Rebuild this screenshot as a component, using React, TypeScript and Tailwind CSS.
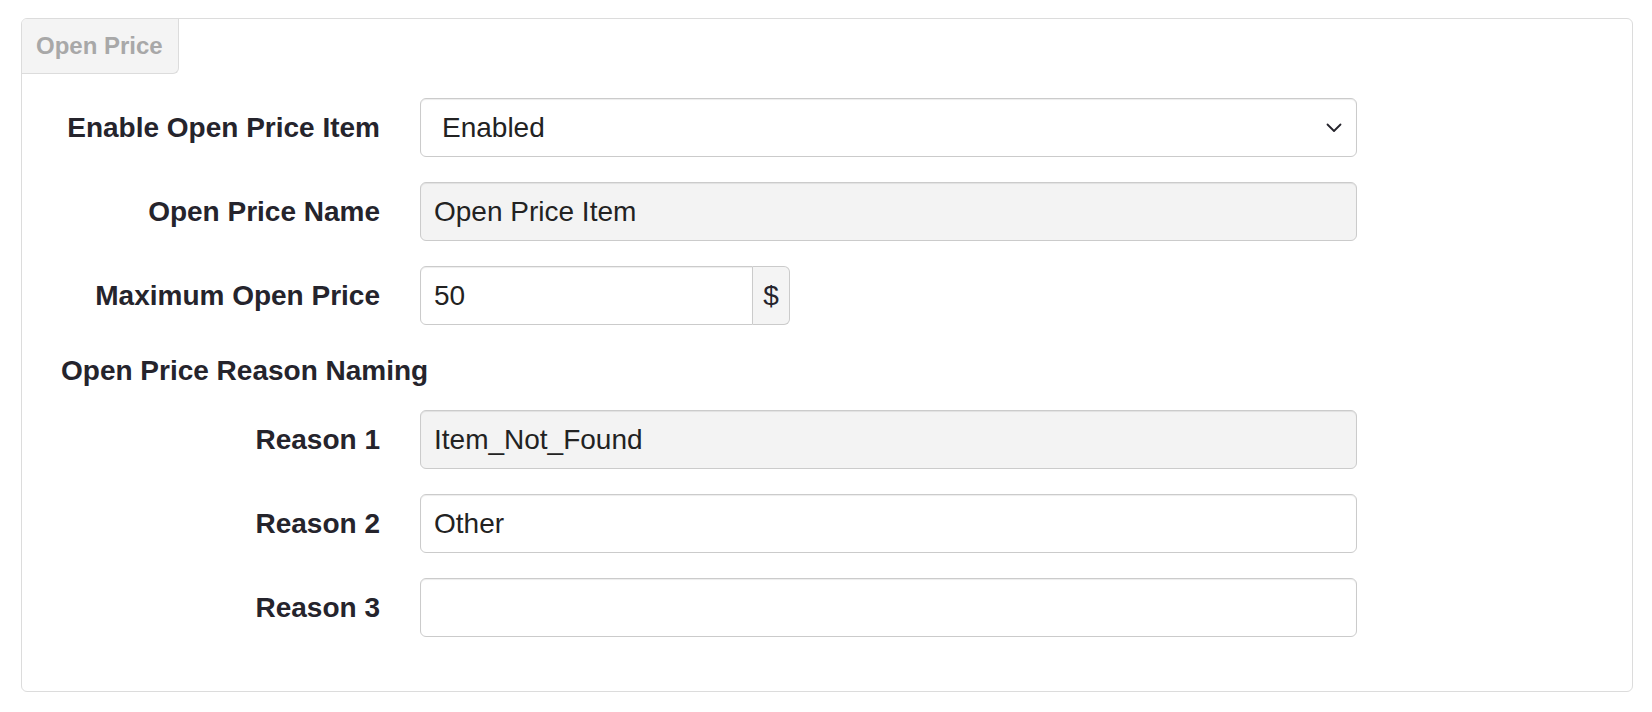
import { useState } from 'react';

const labelCls =
  'w-[358px] shrink-0 text-right text-[28px] font-bold leading-[59px] text-[#25242c]';
const inputCls =
  'h-[59px] w-[937px] rounded-[6px] border border-[#cbcbcb] px-[13px] text-[28px] text-[#222] outline-none shadow-[inset_0_1px_1px_rgba(0,0,0,0.075)]';

function Row({ label, children, className = '' }: { label: string; children: React.ReactNode; className?: string }) {
  return (
    <div className={`flex items-center ${className}`}>
      <label className={labelCls}>{label}</label>
      <div className="ml-[40px]">{children}</div>
    </div>
  );
}

export default function App() {
  const [enabled, setEnabled] = useState('Enabled');
  const [maxPrice, setMaxPrice] = useState('50');
  const [reason2, setReason2] = useState('Other');
  const [reason3, setReason3] = useState('');

  return (
    <div className="min-h-[712px] bg-white pl-[21px] pt-[18px] font-['Liberation_Sans',Arial,sans-serif]">
      <div className="w-[1612px] rounded-[6px] border border-[#dcdcdc] pb-[54px]">
        {/* tab */}
        <div className="flex h-[55px] w-[157px] items-center rounded-tl-[5px] rounded-br-[6px] border-r border-b border-[#dcdcdc] bg-[#f4f4f4] pl-[14px] text-[24px] font-bold text-[#a8a8a8]">
          Open Price
        </div>

        <Row label="Enable Open Price Item" className="mt-[24px]">
          <div className="relative">
            <select
              value={enabled}
              onChange={(e) => setEnabled(e.target.value)}
              className={`${inputCls} appearance-none bg-white pl-[21px]`}
            >
              <option>Enabled</option>
              <option>Disabled</option>
            </select>
            <svg
              className="pointer-events-none absolute right-[15px] top-[25px]"
              width="16"
              height="10"
              viewBox="0 0 16 10"
              fill="none"
            >
              <path d="M1.5 1.5 L8 8 L14.5 1.5" stroke="#25242c" strokeWidth="1.8" strokeLinecap="round" strokeLinejoin="round" />
            </svg>
          </div>
        </Row>

        <Row label="Open Price Name" className="mt-[25px]">
          <input readOnly value="Open Price Item" className={`${inputCls} bg-[#f3f3f3]`} />
        </Row>

        <Row label="Maximum Open Price" className="mt-[25px]">
          <div className="flex h-[59px] w-[370px]">
            <input
              value={maxPrice}
              onChange={(e) => setMaxPrice(e.target.value)}
              className="h-[59px] w-[333px] rounded-l-[6px] border border-[#cbcbcb] px-[13px] text-[28px] text-[#222] outline-none shadow-[inset_0_1px_1px_rgba(0,0,0,0.075)]"
            />
            <span className="flex h-[59px] w-[37px] items-center justify-center rounded-r-[6px] border border-l-0 border-[#cbcbcb] bg-[#f4f4f4] text-[28px] text-[#25242c]">
              $
            </span>
          </div>
        </Row>

        <div className="ml-[39px] mt-[26px] h-[40px] text-[28px] font-bold leading-[40px] text-[#25242c]">
          Open Price Reason Naming
        </div>

        <Row label="Reason 1" className="mt-[19px]">
          <input readOnly value="Item_Not_Found" className={`${inputCls} bg-[#f3f3f3]`} />
        </Row>

        <Row label="Reason 2" className="mt-[25px]">
          <input value={reason2} onChange={(e) => setReason2(e.target.value)} className={`${inputCls} bg-white`} />
        </Row>

        <Row label="Reason 3" className="mt-[25px]">
          <input value={reason3} onChange={(e) => setReason3(e.target.value)} className={`${inputCls} bg-white`} />
        </Row>
      </div>
    </div>
  );
}
